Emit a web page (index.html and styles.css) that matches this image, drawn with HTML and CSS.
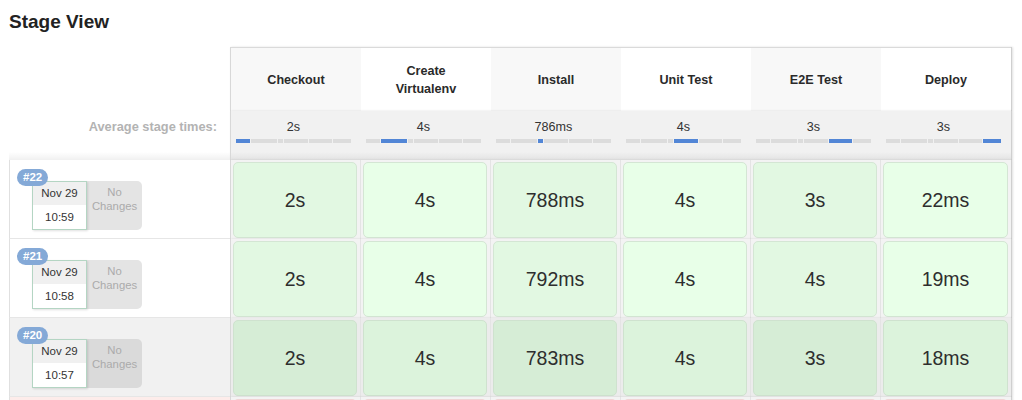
FILE: index.html
```html
<!DOCTYPE html>
<html>
<head>
<meta charset="utf-8">
<link rel="stylesheet" href="styles.css">
</head>
<body>
<div class="page">
  <h2 class="title">Stage View</h2>
  <div class="table">
    <div class="row head-row">
      <div class="lead"></div>
      <div class="stages">
        <div class="hcell odd">Checkout</div>
        <div class="hcell">Create Virtualenv</div>
        <div class="hcell odd">Install</div>
        <div class="hcell">Unit Test</div>
        <div class="hcell odd">E2E Test</div>
        <div class="hcell">Deploy</div>
      </div>
    </div>
    <div class="row avg-row">
      <div class="lead avg-label">Average stage times:</div>
      <div class="stages">
        <div class="acell">
          <div class="atime">2s</div>
          <div class="track"><i class="seg on" style="flex-grow:15"></i><i class="seg" style="flex-grow:27"></i><i class="seg" style="flex-grow:5"></i><i class="seg" style="flex-grow:25"></i><i class="seg" style="flex-grow:24"></i><i class="seg" style="flex-grow:19"></i></div>
        </div>
        <div class="acell">
          <div class="atime">4s</div>
          <div class="track"><i class="seg" style="flex-grow:15"></i><i class="seg on" style="flex-grow:27"></i><i class="seg" style="flex-grow:5"></i><i class="seg" style="flex-grow:25"></i><i class="seg" style="flex-grow:24"></i><i class="seg" style="flex-grow:19"></i></div>
        </div>
        <div class="acell">
          <div class="atime">786ms</div>
          <div class="track"><i class="seg" style="flex-grow:15"></i><i class="seg" style="flex-grow:27"></i><i class="seg on" style="flex-grow:5"></i><i class="seg" style="flex-grow:25"></i><i class="seg" style="flex-grow:24"></i><i class="seg" style="flex-grow:19"></i></div>
        </div>
        <div class="acell">
          <div class="atime">4s</div>
          <div class="track"><i class="seg" style="flex-grow:15"></i><i class="seg" style="flex-grow:27"></i><i class="seg" style="flex-grow:5"></i><i class="seg on" style="flex-grow:25"></i><i class="seg" style="flex-grow:24"></i><i class="seg" style="flex-grow:19"></i></div>
        </div>
        <div class="acell">
          <div class="atime">3s</div>
          <div class="track"><i class="seg" style="flex-grow:15"></i><i class="seg" style="flex-grow:27"></i><i class="seg" style="flex-grow:5"></i><i class="seg" style="flex-grow:25"></i><i class="seg on" style="flex-grow:24"></i><i class="seg" style="flex-grow:19"></i></div>
        </div>
        <div class="acell">
          <div class="atime">3s</div>
          <div class="track"><i class="seg" style="flex-grow:15"></i><i class="seg" style="flex-grow:27"></i><i class="seg" style="flex-grow:5"></i><i class="seg" style="flex-grow:25"></i><i class="seg" style="flex-grow:24"></i><i class="seg on" style="flex-grow:19"></i></div>
        </div>
      </div>
    </div>

    <div class="row build">
      <div class="lead blead">
        <span class="badge">#22</span>
        <div class="meta">
          <div class="when"><div class="d1">Nov 29</div><div class="d2">10:59</div></div>
          <div class="changes">No<br>Changes</div>
        </div>
      </div>
      <div class="stages">
        <div class="scell odd"><div class="box">2s</div></div>
        <div class="scell"><div class="box">4s</div></div>
        <div class="scell odd"><div class="box">788ms</div></div>
        <div class="scell"><div class="box">4s</div></div>
        <div class="scell odd"><div class="box">3s</div></div>
        <div class="scell"><div class="box">22ms</div></div>
      </div>
    </div>

    <div class="row build">
      <div class="lead blead">
        <span class="badge">#21</span>
        <div class="meta">
          <div class="when"><div class="d1">Nov 29</div><div class="d2">10:58</div></div>
          <div class="changes">No<br>Changes</div>
        </div>
      </div>
      <div class="stages">
        <div class="scell odd"><div class="box">2s</div></div>
        <div class="scell"><div class="box">4s</div></div>
        <div class="scell odd"><div class="box">792ms</div></div>
        <div class="scell"><div class="box">4s</div></div>
        <div class="scell odd"><div class="box">4s</div></div>
        <div class="scell"><div class="box">19ms</div></div>
      </div>
    </div>

    <div class="row build hover">
      <div class="lead blead">
        <span class="badge">#20</span>
        <div class="meta">
          <div class="when"><div class="d1">Nov 29</div><div class="d2">10:57</div></div>
          <div class="changes">No<br>Changes</div>
        </div>
      </div>
      <div class="stages">
        <div class="scell odd"><div class="box">2s</div></div>
        <div class="scell"><div class="box">4s</div></div>
        <div class="scell odd"><div class="box">783ms</div></div>
        <div class="scell"><div class="box">4s</div></div>
        <div class="scell odd"><div class="box">3s</div></div>
        <div class="scell"><div class="box">18ms</div></div>
      </div>
    </div>

    <div class="row build failed">
      <div class="lead blead"></div>
      <div class="stages">
        <div class="scell odd"><div class="box"></div></div>
        <div class="scell"><div class="box"></div></div>
        <div class="scell odd"><div class="box"></div></div>
        <div class="scell"><div class="box"></div></div>
        <div class="scell odd"><div class="box"></div></div>
        <div class="scell"><div class="box"></div></div>
      </div>
    </div>
  </div>
</div>
</body>
</html>
```
FILE: styles.css
```css
* { box-sizing: border-box; }
body {
  margin: 0;
  font-family: "Liberation Sans", Arial, Helvetica, sans-serif;
  color: #333;
  background: #fff;
  overflow: hidden;
}
.page { padding-left: 9px; }
.title {
  font-size: 19px;
  font-weight: bold;
  line-height: 22px;
  margin: 11px 0 14px;
  color: #222;
}
.table { width: 1003px; }
.row { display: flex; }
.lead { width: 221px; flex: none; }
.stages {
  display: flex;
  border-left: 1px solid #d8d8d8;
  border-right: 1px solid #cfcfcf;
  box-shadow: 1px 0 2px rgba(0, 0, 0, 0.12);
}

/* header */
.head-row { height: 64px; }
.hcell {
  width: 130px;
  height: 64px;
  border-top: 1px solid #dadada;
  background: #fff;
  display: flex;
  align-items: center;
  justify-content: center;
  text-align: center;
  padding: 0 14px;
  font-size: 12.6px;
  font-weight: bold;
  line-height: 18px;
  color: #2a2a2a;
}
.hcell.odd { background: #f8f8f8; }

/* average row */
.avg-row { height: 49px; }
.avg-label {
  text-align: right;
  padding: 8px 13px 0 0;
  font-size: 12.8px;
  font-weight: bold;
  line-height: 16px;
  color: #b3b3b3;
  background: linear-gradient(to bottom, rgba(0,0,0,0) 41px, rgba(0,0,0,0.06) 49px);
}
.acell {
  width: 130px;
  padding: 8px 10px 0 5px;
  background: linear-gradient(to bottom, #f1f1f1 41px, #e3e3e3 49px);
}
.atime {
  text-align: center;
  font-size: 12.6px;
  line-height: 16px;
  color: #333;
}
.track {
  display: flex;
  gap: 1px;
  margin-top: 4px;
  height: 4px;
}
.seg {
  display: block;
  flex-basis: 0;
  height: 4px;
  background: #dcdcdc;
}
.seg.on { background: #5286d6; }

/* build rows */
.build { height: 79px; }
.blead {
  position: relative;
  border-left: 1px solid #e0e0e0;
  border-bottom: 1px solid #e6e6e6;
  padding: 21px 0 0 22px;
  background: #fff;
}
.badge {
  position: absolute;
  left: 7px;
  top: 9px;
  z-index: 2;
  height: 17px;
  padding: 0 6px;
  border-radius: 9px;
  background: #84a9d7;
  color: #fff;
  font-size: 11.5px;
  font-weight: bold;
  line-height: 17px;
}
.meta { display: flex; }
.when {
  position: relative;
  z-index: 1;
  width: 55px;
  height: 49px;
  border: 1px solid #b4d5c3;
  box-shadow: 1px 1px 2px rgba(0, 0, 0, 0.12);
  font-size: 11.5px;
  text-align: center;
  color: #333;
}
.d1 { height: 23px; line-height: 23px; background: #f0f0f0; }
.d2 { height: 24px; line-height: 24px; background: #fff; }
.changes {
  width: 55px;
  height: 49px;
  padding-top: 4px;
  border-radius: 0 5px 5px 0;
  background: #e4e4e4;
  color: #ababab;
  font-size: 11.3px;
  line-height: 14.3px;
  text-align: center;
}
.scell {
  width: 130px;
  padding: 2px 3px 1px 2px;
  background: #f3f3f3;
  border-right: 1px solid #e4e4e4;
}
.scell:last-child { border-right: 0; }
.box {
  height: 100%;
  display: flex;
  align-items: center;
  justify-content: center;
  border: 1px solid #d4e6d4;
  border-radius: 5px;
  background: #e8ffe8;
  font-size: 19.5px;
  color: #2e2e2e;
}
.scell.odd .box { background: #e2f8e2; }

.hover .blead { background: #f1f1f1; }
.hover .changes { background: #dadada; }
.hover .scell { background: #ececec; }
.hover .box { background: #dcf3dc; border-color: #cfe2cf; }
.hover .scell.odd .box { background: #d6edd6; }

.failed .blead { background: #fdecea; }
.failed .box { background: #ffe8e8; border-color: #f0d4d4; }
.failed .scell.odd .box { background: #fbe2e2; }
```
